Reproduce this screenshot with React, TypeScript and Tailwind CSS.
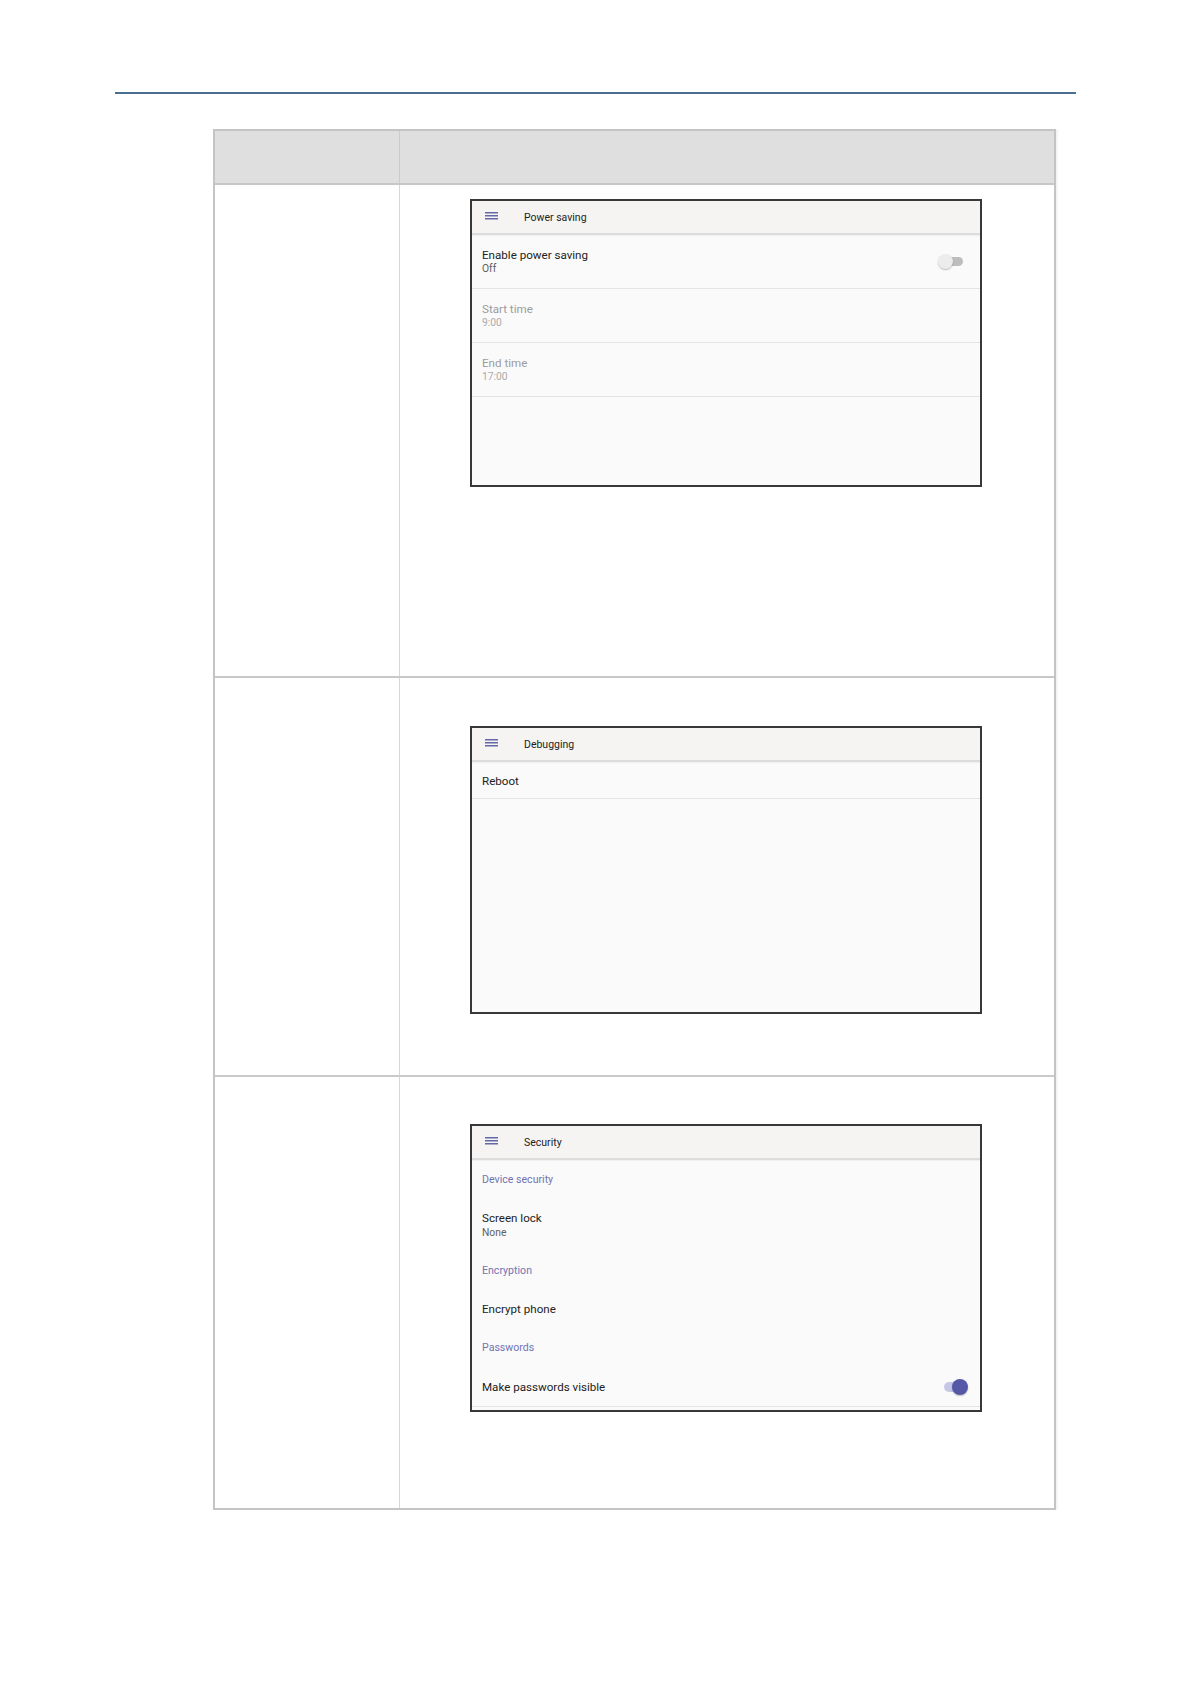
import React from "react";

function Hamburger() {
  return (
    <svg width="13" height="8" viewBox="0 0 13 8" className="mt-[0.5px] shrink-0">
      <rect x="0" y="0" width="13" height="1.5" fill="#6467a8" />
      <rect x="0" y="3" width="13" height="1.5" fill="#6467a8" />
      <rect x="0" y="6" width="13" height="1.5" fill="#6467a8" />
    </svg>
  );
}

function Screen({ title, children }: { title: string; children: React.ReactNode }) {
  return (
    <div className="w-[512px] h-[288px] border-2 border-[#383838] bg-[#fafafa] flex flex-col overflow-hidden font-['Roboto',sans-serif]">
      <div className="h-[34px] shrink-0 bg-[#f5f4f2] border-b-2 border-[#dcdcdc] shadow-[0_1px_1px_rgba(0,0,0,0.04)] flex items-start pt-[10px] pl-[13px]">
        <Hamburger />
        <span className="ml-[26px] text-[10.5px] leading-[13px] text-[#1e1e1e]">{title}</span>
      </div>
      <div className="flex-1 flex flex-col">{children}</div>
    </div>
  );
}

function ToggleOff() {
  return (
    <div className="relative w-[25px] h-[15px] mr-[17px]">
      <div className="absolute right-0 top-[3px] w-[22px] h-[9px] rounded-full bg-[#bdbdbd]" />
      <div className="absolute left-0 top-0 w-[15px] h-[15px] rounded-full bg-[#ececec] shadow-[0_1px_1.5px_rgba(0,0,0,0.25)]" />
    </div>
  );
}

function ToggleOn() {
  return (
    <div className="relative w-[24px] h-[16px] mr-[12px]">
      <div className="absolute left-0 top-[3px] w-[20px] h-[10px] rounded-full bg-[#c6c7e6]" />
      <div className="absolute right-0 top-0 w-[16px] h-[16px] rounded-full bg-[#5558a6] shadow-[0_1px_1.5px_rgba(0,0,0,0.25)]" />
    </div>
  );
}

function PowerSaving() {
  return (
    <Screen title="Power saving">
      <div className="h-[54px] border-b border-[#e4e4e4] flex items-start justify-between pl-[10px]">
        <div className="pt-[13px] flex flex-col">
          <span className="text-[11.6px] leading-[14px] text-[#222]">Enable power saving</span>
          <span className="text-[10.3px] leading-[13px] text-[#5a5a5a]">Off</span>
        </div>
        <div className="self-center">
          <ToggleOff />
        </div>
      </div>
      <div className="h-[54px] border-b border-[#e4e4e4] pl-[10px]">
        <div className="pt-[13px] flex flex-col">
          <span className="text-[11.6px] leading-[14px] text-[#9c9c9c]">Start time</span>
          <span className="text-[10.3px] leading-[13px] text-[#ababab]">9:00</span>
        </div>
      </div>
      <div className="h-[54px] border-b border-[#e4e4e4] pl-[10px]">
        <div className="pt-[13px] flex flex-col">
          <span className="text-[11.6px] leading-[14px] text-[#9c9c9c]">End time</span>
          <span className="text-[10.3px] leading-[13px] text-[#ababab]">17:00</span>
        </div>
      </div>
    </Screen>
  );
}

function Debugging() {
  return (
    <Screen title="Debugging">
      <div className="h-[37px] border-b border-[#e4e4e4] flex items-center pl-[10px] pt-[1px]">
        <span className="text-[11.6px] leading-[14px] text-[#222]">Reboot</span>
      </div>
    </Screen>
  );
}

function Security() {
  return (
    <Screen title="Security">
      <div className="flex flex-col pl-[10px]">
        <span className="pt-[14px] text-[10.6px] leading-[12px] text-[#7173b3]">Device security</span>
        <span className="mt-[25px] text-[11.6px] leading-[14px] text-[#222]">Screen lock</span>
        <span className="mt-[1px] text-[10.3px] leading-[13px] text-[#5f5f5f]">None</span>
        <span className="mt-[26px] text-[10.6px] leading-[12px] text-[#7173b3]">Encryption</span>
        <span className="mt-[25px] text-[11.6px] leading-[14px] text-[#222]">Encrypt phone</span>
        <span className="mt-[26px] text-[10.6px] leading-[12px] text-[#7173b3]">Passwords</span>
      </div>
      <div className="mt-[23px] h-[20px] flex items-center justify-between pl-[10px]">
        <span className="text-[11.6px] leading-[14px] text-[#222]">Make passwords visible</span>
        <ToggleOn />
      </div>
      <div className="mt-[9px] border-b border-[#e4e4e4]" />
    </Screen>
  );
}

export default function App() {
  return (
    <div className="w-[1191px] h-[1684px] bg-white overflow-hidden">
      <div className="pt-[92px] pl-[115px]">
        <div className="w-[961px] h-[2px] bg-[#4b6f91]" />
      </div>
      <div className="mt-[35px] ml-[213px] w-[843px] border-2 border-[#c4c4c4] shadow-[2px_0_0_rgba(0,0,0,0.04)]">
        <div className="flex h-[54px] bg-[#dfdfdf] border-b-2 border-[#c6c6c6]">
          <div className="w-[185px] border-r border-[#cbcbcb]" />
          <div className="flex-1" />
        </div>
        <div className="flex h-[493px] border-b-2 border-[#c8c8c8]">
          <div className="w-[185px] border-r border-[#d8d8d8]" />
          <div className="flex-1 pl-[70px] pt-[14px]">
            <PowerSaving />
          </div>
        </div>
        <div className="flex h-[399px] border-b-2 border-[#cacaca]">
          <div className="w-[185px] border-r border-[#d8d8d8]" />
          <div className="flex-1 pl-[70px] pt-[48px]">
            <Debugging />
          </div>
        </div>
        <div className="flex h-[431px]">
          <div className="w-[185px] border-r border-[#d8d8d8]" />
          <div className="flex-1 pl-[70px] pt-[47px]">
            <Security />
          </div>
        </div>
      </div>
    </div>
  );
}
